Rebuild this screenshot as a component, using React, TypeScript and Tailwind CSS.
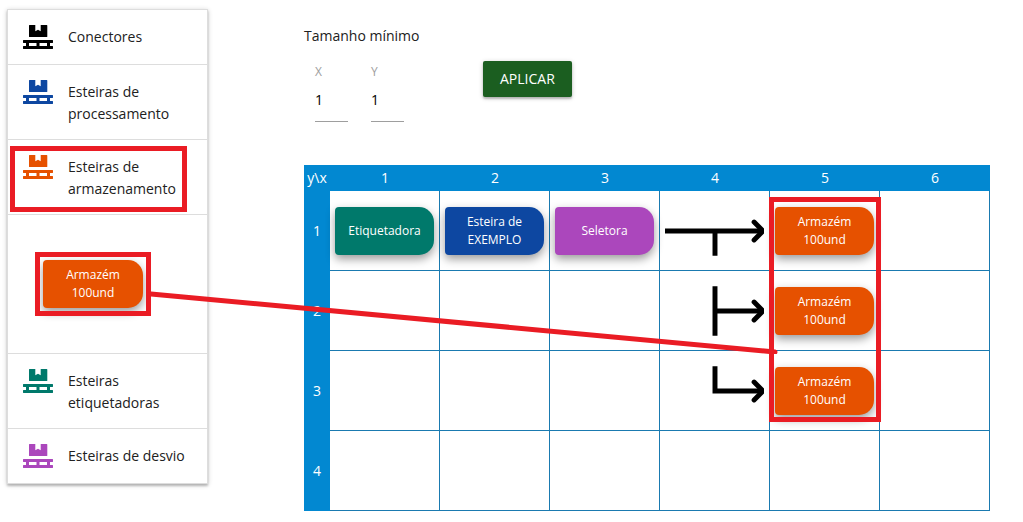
import { useState } from "react";
import type { ReactNode } from "react";

type Group = { label: string; color: string; open?: boolean; marked?: boolean };

const groups: Group[] = [
  { label: "Conectores", color: "text-black" },
  { label: "Esteiras de processamento", color: "text-[#0d47a1]" },
  { label: "Esteiras de armazenamento", color: "text-[#e65100]", open: true, marked: true },
  { label: "Esteiras etiquetadoras", color: "text-[#00796b]" },
  { label: "Esteiras de desvio", color: "text-[#ab47bc]" },
];

function PalletIcon({ color }: { color: string }) {
  return (
    <svg viewBox="0 0 30 24" fill="currentColor" className={`h-6 w-[30px] shrink-0 ${color}`} aria-hidden="true">
      <path d="M6.5 0H12.3V6.2L15 4.7 17.7 6.2V0H23.7Q24.3 0 24.3 .6V11.4Q24.3 12 23.7 12H6.6Q6 12 6 11.4V.6Q6 0 6.5 0Z" />
      <path d="M.4 15H29.6Q30 15 30 15.4V17.6Q30 18 29.6 18H27V21H29.6Q30 21 30 21.4V23.6Q30 24 29.6 24H.4Q0 24 0 23.6V21.4Q0 21 .4 21H3V18H.4Q0 18 0 17.6V15.4Q0 15 .4 15ZM6 18V21H13.5V18ZM16.5 18V21H24V18Z" fillRule="evenodd" />
    </svg>
  );
}

function Belt({ color, children }: { color: string; children: ReactNode }) {
  return (
    <div
      className={`flex h-12 items-center justify-center rounded-l-[4px] rounded-r-[15px] px-3 text-center text-[12px] leading-[18px] text-white shadow-[0_4px_10px_rgba(0,0,0,0.4)] ${color}`}
    >
      <span>{children}</span>
    </div>
  );
}

function Storage() {
  return (
    <Belt color="bg-[#e65100]">
      Armazém
      <br />
      100und
    </Belt>
  );
}

function Connector({ stem }: { stem: string }) {
  return (
    <svg viewBox="0 0 100 50" className="block h-[50px] w-full" fill="none" stroke="#000" strokeWidth="5" aria-hidden="true">
      <path d={stem} />
      <path d="M90 16 99 25 90 34" strokeLinecap="round" strokeLinejoin="bevel" />
    </svg>
  );
}

const columns = [1, 2, 3, 4, 5, 6];

const rows: Record<number, ReactNode>[] = [
  {
    1: <Belt color="bg-[#00796b]">Etiquetadora</Belt>,
    2: (
      <Belt color="bg-[#0d47a1]">
        Esteira de
        <br />
        EXEMPLO
      </Belt>
    ),
    3: <Belt color="bg-[#ab47bc]">Seletora</Belt>,
    4: <Connector stem="M0 25H98M50.5 25V50" />,
    5: <Storage />,
  },
  { 4: <Connector stem="M50.5 0V50M50.5 25H98" />, 5: <Storage /> },
  { 4: <Connector stem="M50.5 0V25M48 25H98" />, 5: <Storage /> },
  {},
];

function Field({ id, label }: { id: string; label: string }) {
  const [value, setValue] = useState("1");
  return (
    <div className="flex w-[33px] flex-col">
      <label htmlFor={id} className="text-[12px] leading-[18px] text-[#9e9e9e]">
        {label}
      </label>
      <input
        id={id}
        inputMode="numeric"
        value={value}
        onChange={(e) => setValue(e.target.value)}
        className="h-[41px] w-full border-b border-[#9e9e9e] bg-transparent pb-1 text-[14px] text-black outline-none"
      />
    </div>
  );
}

export default function App() {
  return (
    <div className="relative flex items-start gap-24 bg-white py-[9px] pl-[7px] font-['Open_Sans','Noto_Sans',sans-serif] text-[14px] leading-[22px] text-[#212121]">
      <aside className="w-[201px] shrink-0 border border-[#ddd] shadow-[0_2px_2px_rgba(0,0,0,0.2),0_1px_5px_rgba(0,0,0,0.2)]">
        <ul className="divide-y divide-[#ddd]">
          {groups.map((g) => (
            <li key={g.label} className="divide-y divide-[#ddd]">
              <button
                type="button"
                aria-expanded={!!g.open}
                className="relative flex min-h-[54px] w-full items-start gap-[15px] px-[15px] pt-[15px] pb-[14px] text-left"
              >
                <PalletIcon color={g.color} />
                <span className="pt-px">{g.label}</span>
                {g.marked && <span className="pointer-events-none absolute top-1.5 right-5 bottom-0.5 left-0.5 border-5 border-[#ea1c24]" />}
              </button>
              {g.open && (
                <div className="px-[35px] py-[45px]">
                  <div className="relative w-[100px]">
                    <Storage />
                    <span className="pointer-events-none absolute -inset-2 border-5 border-[#ea1c24]" />
                  </div>
                </div>
              )}
            </li>
          ))}
        </ul>
      </aside>

      <main className="grow pt-4">
        <h1>Tamanho mínimo</h1>
        <form className="flex items-start px-[11px] pt-[14px]" onSubmit={(e) => e.preventDefault()}>
          <div className="flex gap-[23px] pt-0.5">
            <Field id="size-x" label="X" />
            <Field id="size-y" label="Y" />
          </div>
          <button
            type="submit"
            className="ml-[79px] h-9 rounded-[2px] bg-[#1b5e20] px-[17px] text-white shadow-[0_2px_2px_rgba(0,0,0,0.2),0_1px_5px_rgba(0,0,0,0.2)]"
          >
            APLICAR
          </button>
        </form>

        <div className="relative mt-[43px] w-max">
          <table className="table-fixed border-separate border-spacing-0">
            <thead>
              <tr className="h-[26px] bg-[#0288d1] text-white">
                <th className="w-[26px] p-0 font-normal">y\x</th>
                {columns.map((c) => (
                  <th key={c} scope="col" className="w-[110px] p-0 font-normal">
                    {c}
                  </th>
                ))}
              </tr>
            </thead>
            <tbody>
              {rows.map((row, i) => (
                <tr key={i} className="h-20">
                  <th scope="row" className="bg-[#0288d1] p-0 font-normal text-white">
                    {i + 1}
                  </th>
                  {columns.map((c) => (
                    <td key={c} className="border-r border-b border-r-[#1a7ab0] border-b-[#1a7ab0] px-[5px] py-0">
                      {row[c]}
                    </td>
                  ))}
                </tr>
              ))}
            </tbody>
          </table>
          <span className="pointer-events-none absolute top-8 left-[465px] h-[225px] w-28 border-5 border-[#ea1c24]" />
        </div>
      </main>

      <svg className="pointer-events-none absolute top-[290px] left-[150px] h-16 w-[632px]" viewBox="0 0 632 64" fill="none" stroke="#ea1c24" strokeWidth="5" strokeLinecap="round" aria-hidden="true">
        <path d="M1 4 625 62" />
      </svg>
    </div>
  );
}
